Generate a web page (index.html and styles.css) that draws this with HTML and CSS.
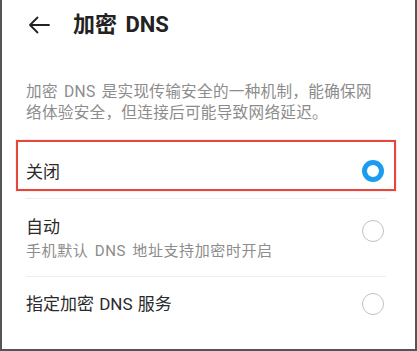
FILE: index.html
```html
<!DOCTYPE html>
<html lang="zh-CN">
<head>
<meta charset="UTF-8">
<meta name="viewport" content="width=device-width,initial-scale=1">
<title>加密 DNS</title>
<link rel="stylesheet" href="styles.css">
</head>
<body>
<div class="screen">

  <!-- ===== 标题栏 ===== -->
  <div class="topbar">
    <svg class="back" width="22" height="18" viewBox="0 0 22 18">
      <path d="M21 9H2M9.5 1.5L2 9l7.5 7.5" fill="none" stroke="#222" stroke-width="1.8" stroke-linecap="round" stroke-linejoin="round"/>
    </svg>
    <h1>加密 DNS</h1>
  </div>

  <p class="desc">加密 DNS 是实现传输安全的一种机制，能确保网络体验安全，但连接后可能导致网络延迟。</p>

  <!-- ===== 选项 ===== -->
  <div class="options">
    <div class="row marked">
      <div class="label">关闭</div>
      <span class="radio on"></span>
    </div>
    <div class="row tall">
      <div>
        <div class="label">自动</div>
        <div class="sub">手机默认 DNS 地址支持加密时开启</div>
      </div>
      <span class="radio"></span>
    </div>
    <div class="row">
      <div class="label">指定加密 DNS 服务</div>
      <span class="radio"></span>
    </div>
  </div>

</div>
</body>
</html>
```

FILE: styles.css
```css
:root{
  --fg:#1f1f1f;--muted:#8c8c8c;--accent:#1a9cf0;--line:#f0edf1;--mark:#e8453c;
}
*{box-sizing:border-box;margin:0;padding:0}
body{font:16px/1.4 Roboto,"Noto Sans CJK SC",sans-serif;background:#fff;color:var(--fg)}
.screen{width:417px;height:351px;background:#fff;overflow:hidden;
        border-left:2px solid #555;border-right:2px solid #555;border-bottom:2px solid #555}
.topbar{height:50px;display:flex;align-items:center;padding-left:26px;gap:23px}
.back{flex:none}
.topbar h1{font-size:22px;font-weight:700;color:#222;word-spacing:3px}
.desc{margin:32px 0 0;padding:0 38px 0 24px;font-size:15.6px;line-height:21px;color:var(--muted);
      letter-spacing:.3px;word-spacing:2px}
.options{margin:22px 29px 0 24px}
.row{position:relative;display:flex;align-items:center;justify-content:space-between;
     padding:14px 2px 14px 0;border-bottom:1px solid var(--line);min-height:52px}
.row:last-child{border-bottom:none;padding-top:15px}
.row.tall{padding:16px 2px 15px 0}
.label{font-size:17px;line-height:24px;color:#2a2a2a;letter-spacing:0;word-spacing:1px}
.sub{font-size:15px;line-height:20px;color:var(--muted);margin-top:2px;letter-spacing:.6px;word-spacing:2px}
.radio{width:22px;height:22px;border-radius:50%;border:1.5px solid #c2c2c2;flex:none}
.radio.on{border:5.5px solid var(--accent);margin-top:-3px}
.row.tall .radio{margin-top:-14px}
.marked::after{content:"";position:absolute;left:-10px;right:-10px;top:-6px;bottom:7px;
               border:2px solid var(--mark);box-shadow:0 0 1px rgba(232,69,60,.5)}
```
